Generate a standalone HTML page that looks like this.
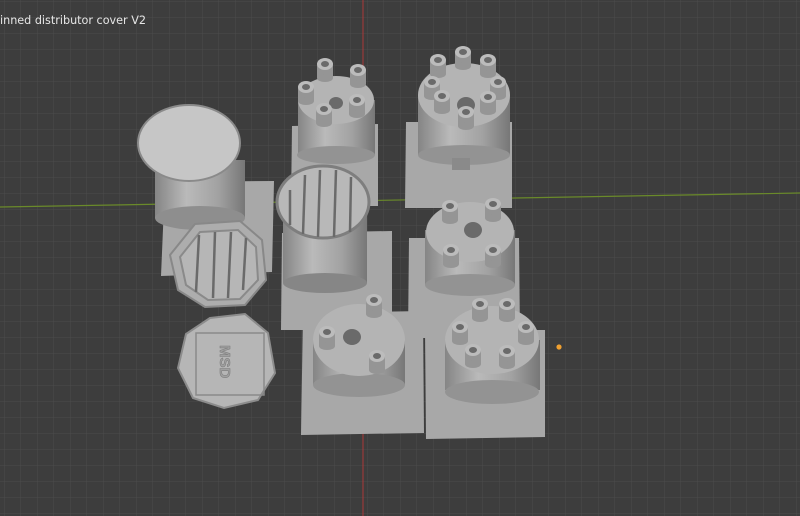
<!DOCTYPE html>
<html><head><meta charset="utf-8"><style>
html,body{margin:0;padding:0;width:800px;height:516px;overflow:hidden;background:#3d3d3d}
svg{position:absolute;left:0;top:0}
.t{position:absolute;left:0;top:14px;color:#e6e6e6;font:11.2px "DejaVu Sans","Liberation Sans",sans-serif;white-space:nowrap}
</style></head><body>
<svg width="800" height="516" viewBox="0 0 800 516">
<defs>
<pattern id="g" width="16.5" height="16" patternUnits="userSpaceOnUse" x="4" y="1">
<path d="M0 0H16.5M0 0V16" stroke="#4c4c4c" stroke-width="1" fill="none"/>
</pattern>
<linearGradient id="cyl" x1="0" x2="1">
<stop offset="0" stop-color="#858585"/><stop offset=".35" stop-color="#bababa"/><stop offset=".7" stop-color="#a2a2a2"/><stop offset="1" stop-color="#777"/>
</linearGradient>
<g id="post"><rect x="-8" y="-6" width="16" height="14" fill="#959595"/><ellipse cx="0" cy="8" rx="8" ry="4" fill="#959595"/><ellipse cx="0" cy="-6" rx="8" ry="6" fill="#bcbcbc"/><ellipse cx="0" cy="-6" rx="4" ry="3" fill="#6a6a6a"/></g>
</defs>
<rect width="800" height="516" fill="#3d3d3d"/>
<rect width="800" height="516" fill="url(#g)"/>
<line x1="0" y1="207" x2="800" y2="193" stroke="#6a8a2a" stroke-width="1.2"/>
<line x1="363" y1="0" x2="363" y2="516" stroke="#9a3a3a" stroke-width="1.2"/>
<g fill="#a8a8a8">
<polygon points="165,182 274,181 272,272 161,276"/>
<polygon points="292,126 378,124 378,206 291,206"/>
<polygon points="406,122 512,122 512,208 405,208"/>
<polygon points="282,233 392,231 392,330 281,330"/>
<polygon points="409,238 519,238 520,338 408,338"/>
<polygon points="303,313 423,311 424,433 301,435"/>
<polygon points="425,330 545,330 545,437 426,439"/>
</g>
<rect x="155" y="160" width="90" height="58" fill="url(#cyl)"/>
<ellipse cx="200" cy="218" rx="45" ry="12" fill="#8e8e8e"/>
<ellipse cx="189" cy="143" rx="51" ry="38" fill="#c6c6c6" stroke="#8a8a8a" stroke-width="2"/>
<polygon points="195,224 240,221 262,240 266,280 245,305 205,307 178,290 170,255" fill="#adadad" stroke="#888" stroke-width="2"/>
<polygon points="200,232 238,230 256,247 258,280 240,299 208,300 186,285 180,257" fill="#b6b6b6" stroke="#8a8a8a" stroke-width="2"/>
<g stroke="#6a6a6a" stroke-width="2.5"><line x1="199" y1="235" x2="196" y2="292"/><line x1="215" y1="232" x2="213" y2="298"/><line x1="231" y1="232" x2="228" y2="298"/><line x1="246" y1="238" x2="243" y2="290"/></g>
<polygon points="210,318 245,314 268,333 275,373 258,400 224,408 193,398 178,368 186,334" fill="#b6b6b6" stroke="#8c8c8c" stroke-width="2"/>
<rect x="196" y="333" width="68" height="62" fill="none" stroke="#8a8a8a" stroke-width="1.5"/>
<text x="0" y="0" transform="translate(220,345) rotate(90)" font-family="Liberation Sans,sans-serif" font-weight="bold" font-size="15" fill="#a0a0a0" stroke="#7e7e7e" stroke-width=".6">MSD</text>
<rect x="298" y="100" width="77" height="55" fill="url(#cyl)"/>
<ellipse cx="336" cy="155" rx="39" ry="9" fill="#939393"/>
<ellipse cx="336" cy="100" rx="38" ry="24" fill="#b4b4b4"/>
<ellipse cx="336" cy="103" rx="7" ry="6" fill="#6a6a6a"/>
<use href="#post" x="325" y="70"/><use href="#post" x="358" y="76"/><use href="#post" x="306" y="93"/><use href="#post" x="357" y="106"/><use href="#post" x="324" y="115"/>
<rect x="418" y="95" width="92" height="60" fill="url(#cyl)"/>
<ellipse cx="464" cy="155" rx="46" ry="10" fill="#939393"/>
<rect x="452" y="158" width="18" height="12" fill="#8a8a8a"/>
<ellipse cx="464" cy="95" rx="46" ry="32" fill="#b4b4b4"/>
<ellipse cx="466" cy="105" rx="9" ry="8" fill="#6a6a6a"/>
<use href="#post" x="463" y="58"/><use href="#post" x="438" y="66"/><use href="#post" x="488" y="66"/><use href="#post" x="432" y="88"/><use href="#post" x="498" y="88"/><use href="#post" x="442" y="102"/><use href="#post" x="488" y="103"/><use href="#post" x="466" y="118"/>
<rect x="283" y="205" width="84" height="78" fill="url(#cyl)"/>
<ellipse cx="325" cy="283" rx="42" ry="10" fill="#868686"/>
<ellipse cx="323" cy="202" rx="46" ry="36" fill="#b8b8b8" stroke="#7e7e7e" stroke-width="3"/>
<g stroke="#6a6a6a" stroke-width="2.5"><line x1="290" y1="190" x2="290" y2="225"/><line x1="305" y1="175" x2="303" y2="234"/><line x1="320" y1="170" x2="318" y2="237"/><line x1="336" y1="170" x2="334" y2="237"/><line x1="351" y1="177" x2="350" y2="232"/></g>
<rect x="425" y="230" width="90" height="55" fill="url(#cyl)"/>
<ellipse cx="470" cy="285" rx="45" ry="11" fill="#939393"/>
<ellipse cx="470" cy="232" rx="44" ry="30" fill="#b4b4b4"/>
<ellipse cx="473" cy="230" rx="9" ry="8" fill="#6a6a6a"/>
<use href="#post" x="450" y="212"/><use href="#post" x="493" y="210"/><use href="#post" x="451" y="256"/><use href="#post" x="493" y="256"/>
<rect x="313" y="340" width="92" height="45" fill="url(#cyl)"/>
<ellipse cx="359" cy="385" rx="46" ry="12" fill="#939393"/>
<ellipse cx="359" cy="340" rx="46" ry="36" fill="#b4b4b4"/>
<ellipse cx="352" cy="337" rx="9" ry="8" fill="#6a6a6a"/>
<use href="#post" x="327" y="338"/><use href="#post" x="374" y="306"/><use href="#post" x="377" y="362"/>
<rect x="445" y="340" width="95" height="50" fill="url(#cyl)"/>
<ellipse cx="492" cy="392" rx="47" ry="12" fill="#939393"/>
<ellipse cx="492" cy="340" rx="47" ry="34" fill="#b4b4b4"/>
<use href="#post" x="480" y="310"/><use href="#post" x="507" y="310"/><use href="#post" x="460" y="333"/><use href="#post" x="526" y="333"/><use href="#post" x="473" y="356"/><use href="#post" x="507" y="357"/>
<circle cx="559" cy="347" r="2.6" fill="#f0a030"/>
</svg>
<div class="t">inned distributor cover V2</div>
</body></html>
